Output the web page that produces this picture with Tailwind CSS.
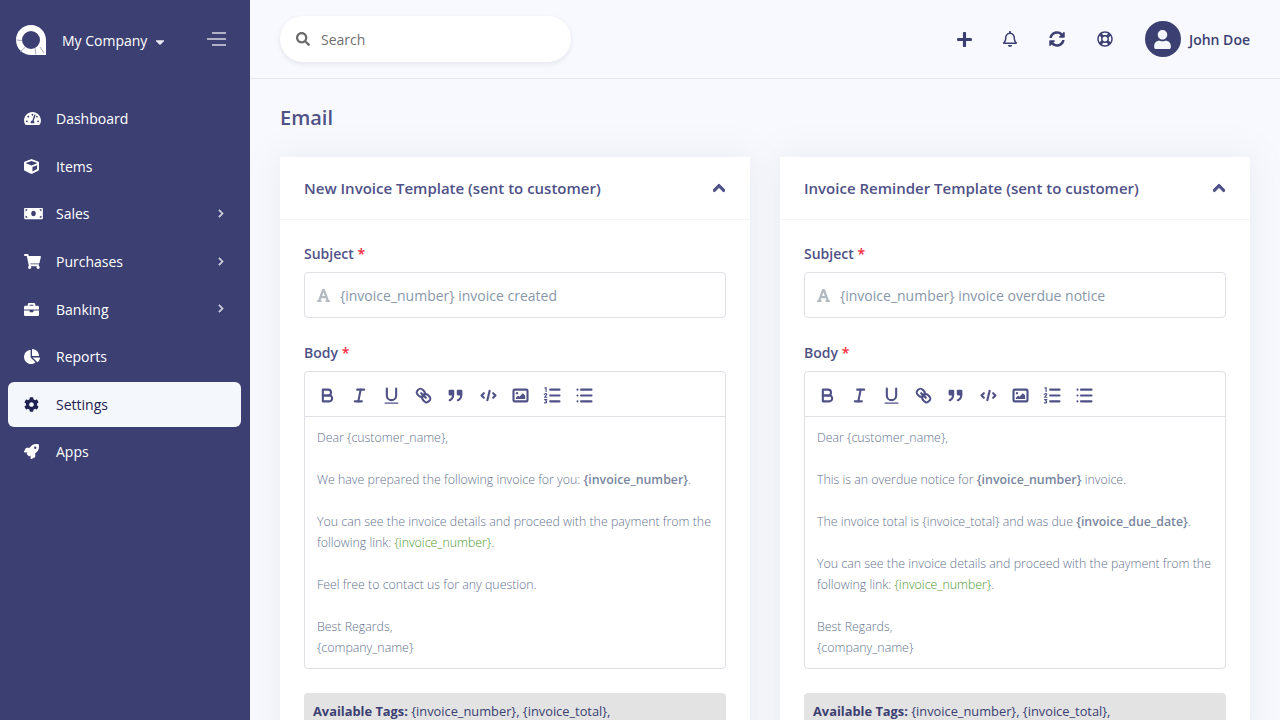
<!DOCTYPE html>
<html lang="en">
<head>
    <meta charset="UTF-8">
    <meta name="viewport" content="width=device-width, initial-scale=1.0">
    <title>Email</title>
    <script src="https://cdn.jsdelivr.net/npm/@tailwindcss/browser@4"></script>
</head>
<body class="h-screen overflow-hidden bg-[#f8f9fe] font-['Open_Sans',sans-serif] text-[#3c3f72]">
    <!-- toolbar icons, shared by both editors -->
    <svg class="hidden">
        <symbol id="ql-bold" viewBox="0 0 18 18"><path d="M5,4H9.5A2.5,2.5,0,0,1,12,6.5v0A2.5,2.5,0,0,1,9.5,9H5V4Z"/><path d="M5,9h5.5A2.5,2.5,0,0,1,13,11.5v0A2.5,2.5,0,0,1,10.5,14H5V9Z"/></symbol>
        <symbol id="ql-italic" viewBox="0 0 18 18"><line x1="7" x2="13" y1="4" y2="4"/><line x1="5" x2="11" y1="14" y2="14"/><line x1="8" x2="10" y1="14" y2="4"/></symbol>
        <symbol id="ql-underline" viewBox="0 0 18 18"><path d="M5,3V9a4,4,0,0,0,4,4H9a4,4,0,0,0,4-4V3"/><rect x="3" y="15" width="12" height="1" rx=".5" fill="currentColor" stroke="none"/></symbol>
        <symbol id="ql-link" viewBox="0 0 18 18"><line x1="7" x2="11" y1="7" y2="11"/><path d="M8.9,4.577a3.476,3.476,0,0,1,.36,4.679A3.476,3.476,0,0,1,4.577,8.9C3.185,7.5,2.035,6.4,4.217,4.217S7.5,3.185,8.9,4.577Z"/><path d="M13.423,9.1a3.476,3.476,0,0,0-4.679-.36,3.476,3.476,0,0,0,.36,4.679c1.392,1.392,2.5,2.542,4.679.36S14.815,10.5,13.423,9.1Z"/></symbol>
        <symbol id="ql-quote" viewBox="0 0 18 18"><rect x="4" y="5" width="3" height="3" fill="currentColor"/><rect x="11" y="5" width="3" height="3" fill="currentColor"/><path d="M7,8c0,4.031-3,5-3,5"/><path d="M14,8c0,4.031-3,5-3,5"/></symbol>
        <symbol id="ql-code" viewBox="0 0 18 18"><polyline points="5 7 3 9 5 11"/><polyline points="13 7 15 9 13 11"/><line x1="10" x2="8" y1="5" y2="13"/></symbol>
        <symbol id="ql-image" viewBox="0 0 18 18"><rect x="3" y="4" width="12" height="10" rx="1"/><circle cx="6" cy="7" r="1" fill="currentColor" stroke="none"/><polyline points="5 12 5 11 7 9 8 10 11 7 13 9 13 12 5 12" fill="currentColor" stroke="none"/></symbol>
        <symbol id="ql-ol" viewBox="0 0 18 18"><line x1="7" x2="15" y1="4" y2="4"/><line x1="7" x2="15" y1="9" y2="9"/><line x1="7" x2="15" y1="14" y2="14"/><path stroke-width="1" d="M2.5 2.6l1-.4v3.3M2 8l1-.6c1-.3 1.4.7.7 1.3L2.2 10.5h2M2.2 12.5h2l-1 1.2c1 0 1.2 1.6-.2 1.6h-.9"/></symbol>
        <symbol id="ql-ul" viewBox="0 0 18 18"><line x1="6" x2="15" y1="4" y2="4"/><line x1="6" x2="15" y1="9" y2="9"/><line x1="6" x2="15" y1="14" y2="14"/><line x1="3" x2="3" y1="4" y2="4"/><line x1="3" x2="3" y1="9" y2="9"/><line x1="3" x2="3" y1="14" y2="14"/></symbol>
        <symbol id="fa-up" viewBox="0 0 448 512"><path fill="currentColor" stroke="currentColor" stroke-width="40" d="M240.971 130.524l194.343 194.343c9.373 9.373 9.373 24.569 0 33.941l-22.667 22.667c-9.357 9.357-24.522 9.375-33.901.04L224 227.495 69.255 381.516c-9.379 9.335-24.544 9.317-33.901-.04l-22.667-22.667c-9.373-9.373-9.373-24.569 0-33.941L207.03 130.525c9.372-9.373 24.568-9.373 33.941-.001z"/></symbol>
        <symbol id="fa-right" viewBox="0 0 320 512"><path fill="currentColor" stroke="currentColor" stroke-width="30" d="M285.476 272.971L91.132 467.314c-9.373 9.373-24.569 9.373-33.941 0l-22.667-22.667c-9.357-9.357-9.375-24.522-.04-33.901L188.505 256 34.484 101.255c-9.335-9.379-9.317-24.544.04-33.901l22.667-22.667c9.373-9.373 24.569-9.373 33.941 0L285.475 239.03c9.373 9.372 9.373 24.568.001 33.941z"/></symbol>
        <symbol id="fa-font" viewBox="0 0 448 512"><path fill="currentColor" stroke="none" d="M432 416h-23.41L277.88 53.69A32 32 0 0 0 247.58 32h-47.16a32 32 0 0 0-30.3 21.69L39.41 416H16a16 16 0 0 0-16 16v32a16 16 0 0 0 16 16h128a16 16 0 0 0 16-16v-32a16 16 0 0 0-16-16h-19.6l23.3-64h152.6l23.3 64H304a16 16 0 0 0-16 16v32a16 16 0 0 0 16 16h128a16 16 0 0 0 16-16v-32a16 16 0 0 0-16-16zM176.85 272L224 142.51 271.15 272z"/></symbol>
    </svg>

    <div class="flex h-screen">
        <!-- Sidebar -->
        <aside class="w-[250px] shrink-0 bg-[#3c3f72] text-white">
            <div class="flex items-center h-[79px] pl-[16px] pr-[24px]">
                <svg class="w-[30px] h-[30px] shrink-0" viewBox="0 0 30 30">
                    <path fill="#fff" fill-rule="evenodd" d="M15 0C6.7 0 0 6.7 0 15s6.7 15 15 15h15V15C30 6.7 23.3 0 15 0zm0 6a9 9 0 1 1 0 18 9 9 0 0 1 0-18z"/>
                    <path stroke="#8f91b3" stroke-width="0.8" d="M0.5 15L6 15.5M4 27l5.5-5M19 23l1 6.5M24 22l4 6"/>
                </svg>
                <span class="ml-[16px] mt-[2px] text-[14px] font-medium">My Company</span>
                <svg class="w-[10px] h-[14px] ml-[8px] mt-[5px] opacity-90" viewBox="0 0 320 512"><path fill="currentColor" d="M31.3 192h257.3c17.8 0 26.7 21.5 14.1 34.1L174.1 354.8c-7.8 7.8-20.5 7.8-28.3 0L17.2 226.1C4.6 213.5 13.5 192 31.3 192z"/></svg>
                <svg class="ml-auto w-[19px] h-[14px] -mt-[1px] text-white/75" viewBox="0 0 19 14" stroke="currentColor" stroke-width="1.6"><line x1="5" x2="19" y1="1" y2="1"/><line x1="0" x2="19" y1="7" y2="7"/><line x1="5" x2="19" y1="13" y2="13"/></svg>
            </div>
            <nav class="mt-[16px] pl-[8px] pr-[9px] text-[14px] font-medium">
                <a class="flex items-center h-[47.6px] pl-[16px] pr-[17px]">
                    <span class="w-[32px] shrink-0"><svg class="w-[17px] h-[15px]" viewBox="0 0 576 512"><path fill="currentColor" d="M288 32C128.94 32 0 160.94 0 320c0 52.8 14.25 102.26 39.06 144.8 5.61 9.62 16.3 15.2 27.44 15.2h443c11.14 0 21.83-5.58 27.44-15.2C561.75 422.26 576 372.8 576 320c0-159.06-128.94-288-288-288zm0 64c14.71 0 26.58 10.13 30.32 23.65-1.11 2.26-2.64 4.23-3.45 6.67l-9.22 27.67c-5.13 3.49-10.97 6.01-17.64 6.01-17.67 0-32-14.33-32-32S270.33 96 288 96zM96 384c-17.67 0-32-14.33-32-32s14.33-32 32-32 32 14.33 32 32-14.33 32-32 32zm48-160c-17.67 0-32-14.33-32-32s14.33-32 32-32 32 14.33 32 32-14.33 32-32 32zm246.77-72.41l-61.33 184C343.13 347.33 352 364.54 352 384c0 11.72-3.38 22.55-8.88 32H232.88c-5.5-9.45-8.88-20.28-8.88-32 0-33.94 26.5-61.43 59.9-63.59l61.34-184.01c4.17-12.56 17.73-19.45 30.36-15.17 12.57 4.19 19.35 17.79 15.17 30.36zm14.66 57.2l15.52-46.55c3.47-1.29 7.13-2.23 11.05-2.23 17.67 0 32 14.33 32 32s-14.33 32-32 32c-11.38-.01-20.89-6.28-26.57-15.22zM480 384c-17.67 0-32-14.33-32-32s14.33-32 32-32 32 14.33 32 32-14.33 32-32 32z"/></svg></span>
                    <span>Dashboard</span>
                </a>
                <a class="flex items-center h-[47.6px] pl-[16px] pr-[17px]">
                    <span class="w-[32px] shrink-0"><svg class="w-[15px] h-[15px]" viewBox="0 0 512 512"><path fill="currentColor" d="M239.1 6.3l-208 78c-18.7 7-31.1 25-31.1 45v225.1c0 18.2 10.3 34.8 26.5 42.9l208 104c13.5 6.8 29.4 6.8 42.9 0l208-104c16.3-8.1 26.5-24.8 26.5-42.9V129.3c0-20-12.4-37.9-31.1-44.9l-208-78C262 2.2 250 2.2 239.1 6.3zM256 68.4l192 72v1.1l-192 78-192-78v-1.1l192-72zm32 356V275.5l160-65v133.9l-160 80z"/></svg></span>
                    <span>Items</span>
                </a>
                <a class="flex items-center h-[47.6px] pl-[16px] pr-[17px]">
                    <span class="w-[32px] shrink-0"><svg class="w-[19px] h-[15px]" viewBox="0 0 640 512"><path fill="currentColor" d="M608 64H32C14.33 64 0 78.33 0 96v320c0 17.67 14.33 32 32 32h576c17.67 0 32-14.33 32-32V96c0-17.67-14.33-32-32-32zM48 400v-64c35.35 0 64 28.65 64 64H48zm0-224v-64h64c0 35.35-28.65 64-64 64zm272 176c-44.19 0-80-42.99-80-96 0-53.02 35.82-96 80-96s80 42.98 80 96c0 53.03-35.83 96-80 96zm272 48h-64c0-35.35 28.65-64 64-64v64zm0-224c-35.35 0-64-28.65-64-64h64v64z"/></svg></span>
                    <span>Sales</span>
                    <svg class="ml-auto w-[6px] h-[9px] -mt-[1px] text-white/70"><use href="#fa-right"/></svg>
                </a>
                <a class="flex items-center h-[47.6px] pl-[16px] pr-[17px]">
                    <span class="w-[32px] shrink-0"><svg class="w-[17px] h-[15px]" viewBox="0 0 576 512"><path fill="currentColor" d="M528.12 301.319l47.273-208C578.806 78.301 567.391 64 551.99 64H159.208l-9.166-44.81C147.758 8.021 137.93 0 126.529 0H24C10.745 0 0 10.745 0 24v16c0 13.255 10.745 24 24 24h69.883l70.248 343.435C147.325 417.1 136 435.222 136 456c0 30.928 25.072 56 56 56s56-25.072 56-56c0-15.674-6.447-29.835-16.824-40h209.647C430.447 426.165 424 440.326 424 456c0 30.928 25.072 56 56 56s56-25.072 56-56c0-22.172-12.888-41.332-31.579-50.405l5.517-24.276c3.413-15.018-8.002-29.319-23.403-29.319H218.117l-6.545-32h293.145c11.206 0 20.92-7.754 23.403-18.681z"/></svg></span>
                    <span>Purchases</span>
                    <svg class="ml-auto w-[6px] h-[9px] -mt-[1px] text-white/70"><use href="#fa-right"/></svg>
                </a>
                <a class="flex items-center h-[47.6px] pl-[16px] pr-[17px]">
                    <span class="w-[32px] shrink-0"><svg class="w-[15px] h-[15px]" viewBox="0 0 512 512"><path fill="currentColor" d="M320 336c0 8.84-7.16 16-16 16h-96c-8.84 0-16-7.16-16-16v-48H0v144c0 25.6 22.4 48 48 48h416c25.6 0 48-22.4 48-48V288H320v48zm144-208h-80V80c0-25.6-22.4-48-48-48H176c-25.6 0-48 22.4-48 48v48H48c-25.6 0-48 22.4-48 48v80h512v-80c0-25.6-22.4-48-48-48zm-144 0H192V96h128v32z"/></svg></span>
                    <span>Banking</span>
                    <svg class="ml-auto w-[6px] h-[9px] -mt-[1px] text-white/70"><use href="#fa-right"/></svg>
                </a>
                <a class="flex items-center h-[47.6px] pl-[16px] pr-[17px]">
                    <span class="w-[32px] shrink-0"><svg class="w-[16px] h-[15px]" viewBox="0 0 544 512"><path fill="currentColor" d="M527.79 288H290.5l158.03 158.03c6.04 6.04 15.98 6.53 22.19.68 38.7-36.46 65.32-85.61 73.13-140.86 1.34-9.46-6.51-17.85-16.06-17.85zm-15.83-64.8C503.72 103.74 408.26 8.28 288.8.04 279.68-.59 272 7.1 272 16.24V240h223.77c9.14 0 16.82-7.68 16.19-16.8zM224 288V50.71c0-9.55-8.39-17.4-17.84-16.06C86.99 51.49-4.1 155.6.14 280.37 4.5 408.51 114.83 513.59 243.03 511.98c50.4-.63 96.97-16.87 135.26-44.03 7.9-5.6 8.42-17.23 1.57-24.08L224 288z"/></svg></span>
                    <span>Reports</span>
                </a>
                <a class="flex items-center h-[45px] my-[1.3px] pl-[16px] pr-[17px] rounded-[6px] bg-[#f4f7fb] text-[#1f2150]">
                    <span class="w-[32px] shrink-0"><svg class="w-[15px] h-[15px]" viewBox="0 0 512 512"><path fill="currentColor" d="M487.4 315.7l-42.6-24.6c4.3-23.2 4.3-47 0-70.2l42.6-24.6c4.9-2.8 7.1-8.6 5.5-14-11.1-35.6-30-67.8-54.7-94.6-3.8-4.1-10-5.1-14.8-2.3L380.8 110c-17.9-15.4-38.5-27.3-60.8-35.1V25.8c0-5.6-3.9-10.5-9.4-11.7-36.7-8.2-74.3-7.8-109.2 0-5.5 1.2-9.4 6.1-9.4 11.7V75c-22.2 7.9-42.8 19.8-60.8 35.1L88.7 85.5c-4.9-2.8-11-1.9-14.8 2.3-24.7 26.7-43.6 58.9-54.7 94.6-1.7 5.4.6 11.2 5.5 14L67.3 221c-4.3 23.2-4.3 47 0 70.2l-42.6 24.6c-4.9 2.8-7.1 8.6-5.5 14 11.1 35.6 30 67.8 54.7 94.6 3.8 4.1 10 5.1 14.8 2.3l42.6-24.6c17.9 15.4 38.5 27.3 60.8 35.1v49.2c0 5.6 3.9 10.5 9.4 11.7 36.7 8.2 74.3 7.8 109.2 0 5.5-1.2 9.4-6.1 9.4-11.7v-49.2c22.2-7.9 42.8-19.8 60.8-35.1l42.6 24.6c4.9 2.8 11 1.9 14.8-2.3 24.7-26.7 43.6-58.9 54.7-94.6 1.5-5.5-.7-11.3-5.6-14.1zM256 336c-44.1 0-80-35.9-80-80s35.9-80 80-80 80 35.9 80 80-35.9 80-80 80z"/></svg></span>
                    <span>Settings</span>
                </a>
                <a class="flex items-center h-[47.6px] pl-[16px] pr-[17px]">
                    <span class="w-[32px] shrink-0"><svg class="w-[15px] h-[15px]" viewBox="0 0 512 512"><path fill="currentColor" d="M505.12019,19.09375c-1.18945-5.53125-6.65819-11-12.207-12.1875C460.716,0,435.507,0,410.40747,0,307.17523,0,245.26909,55.20312,199.05238,128H94.83772c-16.34763.01562-35.55658,11.875-42.88664,26.48438L2.51562,253.29688A28.4,28.4,0,0,0,0,264a24.00867,24.00867,0,0,0,24.00582,24H127.81618l-22.47457,22.46875c-11.36521,11.36133-12.99607,32.25781,0,45.25L156.24582,406.625c11.15623,11.1875,32.15619,13.15625,45.27726,0l22.47457-22.46875V488a24.00867,24.00867,0,0,0,24.00581,24,28.55934,28.55934,0,0,0,10.707-2.51562l98.72834-49.39063c14.62888-7.29687,26.50776-26.5,26.50776-42.85937V312.79688c72.59753-46.3125,128.03493-108.40626,128.03493-211.09376C512.07526,76.5,512.07526,51.29688,505.12019,19.09375ZM384.04033,168A40,40,0,1,1,424.05,128,40.02322,40.02322,0,0,1,384.04033,168Z"/></svg></span>
                    <span>Apps</span>
                </a>
            </nav>
        </aside>

        <!-- Main -->
        <div class="flex-1 min-w-0">
            <header class="flex items-center h-[79px] pl-[30px] pr-[30px] border-b border-[#e6e8ef]">
                <div class="flex items-center w-[291px] h-[46px] -mt-[1px] pl-[16px] rounded-full bg-white shadow-[0_2px_5px_rgba(50,50,93,0.1)]">
                    <svg class="w-[14px] h-[14px] text-[#6b6b6b]" viewBox="0 0 512 512"><path fill="currentColor" d="M505 442.7L405.3 343c-4.5-4.5-10.6-7-17-7H372c27.6-35.3 44-79.7 44-128C416 93.1 322.9 0 208 0S0 93.1 0 208s93.1 208 208 208c48.3 0 92.7-16.4 128-44v16.3c0 6.4 2.5 12.5 7 17l99.7 99.7c9.4 9.4 24.6 9.4 33.9 0l28.3-28.3c9.4-9.4 9.4-24.6.1-34zM208 336c-70.7 0-128-57.2-128-128 0-70.7 57.2-128 128-128 70.7 0 128 57.2 128 128 0 70.7-57.2 128-128 128z"/></svg>
                    <span class="ml-[11px] mt-[2px] text-[14px] text-[#6f6f6f]">Search</span>
                </div>
                <div class="flex items-center ml-auto">
                    <svg class="w-[15px] h-[17px]" viewBox="0 0 448 512"><path fill="currentColor" d="M416 208H272V64c0-17.67-14.33-32-32-32h-32c-17.67 0-32 14.33-32 32v144H32c-17.67 0-32 14.33-32 32v32c0 17.67 14.33 32 32 32h144v144c0 17.67 14.33 32 32 32h32c17.67 0 32-14.33 32-32V304h144c17.67 0 32-14.33 32-32v-32c0-17.67-14.33-32-32-32z"/></svg>
                    <svg class="ml-[31px] w-[14px] h-[16px]" viewBox="0 0 448 512"><path fill="currentColor" d="M439.39 362.29c-19.32-20.76-55.47-51.99-55.47-154.29 0-77.7-54.48-139.9-127.94-155.16V32c0-17.67-14.32-32-31.98-32s-31.98 14.33-31.98 32v20.84C118.56 68.1 64.08 130.3 64.08 208c0 102.3-36.15 133.53-55.47 154.29-6 6.45-8.66 14.16-8.61 21.71.11 16.4 12.98 32 32.1 32h383.8c19.12 0 32-15.6 32.1-32 .05-7.55-2.61-15.27-8.61-21.71zM67.53 368c21.22-27.97 44.42-74.33 44.53-159.42 0-.2-.06-.38-.06-.58 0-61.86 50.14-112 112-112s112 50.14 112 112c0 .2-.06.38-.06.58.11 85.1 23.31 131.46 44.53 159.42H67.53zM224 512c35.32 0 63.97-28.65 63.97-64H160.03c0 35.35 28.65 64 63.97 64z"/></svg>
                    <svg class="ml-[32px] w-[16px] h-[16px]" viewBox="0 0 512 512"><path fill="currentColor" d="M370.72 133.28C339.458 104.008 298.888 87.962 255.848 88c-77.458.068-144.328 53.178-162.791 126.85-1.344 5.363-6.122 9.15-11.651 9.15H24.103c-7.498 0-13.194-6.807-11.807-14.176C33.933 94.924 134.813 8 256 8c66.448 0 126.791 26.136 171.315 68.685L463.03 40.97C478.149 25.851 504 36.559 504 57.941V192c0 13.255-10.745 24-24 24H345.941c-21.382 0-32.09-25.851-16.971-40.971l41.75-41.749zM32 296h134.059c21.382 0 32.09 25.851 16.971 40.971l-41.75 41.75c31.262 29.273 71.835 45.319 114.876 45.28 77.418-.07 144.315-53.144 162.787-126.849 1.344-5.363 6.122-9.15 11.651-9.15h57.304c7.498 0 13.194 6.807 11.807 14.176C478.067 417.076 377.187 504 256 504c-66.448 0-126.791-26.136-171.315-68.685L48.97 471.03C33.851 486.149 8 475.441 8 454.059V320c0-13.255 10.745-24 24-24z"/></svg>
                    <svg class="ml-[32px] w-[16px] h-[16px]" viewBox="0 0 512 512"><path fill="currentColor" d="M256 504c136.967 0 248-111.033 248-248S392.967 8 256 8 8 119.033 8 256s111.033 248 248 248zm-103.398-76.72l53.411-53.411c31.806 13.506 68.128 13.522 99.974 0l53.411 53.411c-63.217 38.319-143.579 38.319-206.796 0zM336 256c0 44.112-35.888 80-80 80s-80-35.888-80-80 35.888-80 80-80 80 35.888 80 80zm91.28 103.398l-53.411-53.411c13.505-31.806 13.522-68.128 0-99.974l53.411-53.411c38.319 63.217 38.319 143.579 0 206.796zM359.397 84.72l-53.411 53.411c-31.806-13.505-68.128-13.522-99.973 0L152.602 84.72c63.217-38.319 143.579-38.319 206.795 0zM84.72 152.602l53.411 53.411c-13.506 31.806-13.522 68.128 0 99.974L84.72 359.398c-38.319-63.217-38.319-143.579 0-206.796z"/></svg>
                    <span class="ml-[32px] flex items-center justify-center w-[36px] h-[36px] rounded-full bg-[#3c3f72]">
                        <svg class="w-[17px] h-[19px] text-[#f4f7fb]" viewBox="0 0 448 512"><path fill="currentColor" d="M224 256c70.7 0 128-57.3 128-128S294.7 0 224 0 96 57.3 96 128s57.3 128 128 128zm89.6 32h-16.7c-22.2 10.2-46.9 16-72.9 16s-50.6-5.8-72.9-16h-16.7C60.2 288 0 348.2 0 422.4V464c0 26.5 21.5 48 48 48h352c26.5 0 48-21.5 48-48v-41.6c0-74.2-60.2-134.4-134.4-134.4z"/></svg>
                    </span>
                    <span class="ml-[8px] text-[14px] font-semibold">John Doe</span>
                </div>
            </header>

            <main class="px-[30px]">
                <h1 class="h-[78px] pt-[22px] text-[20px] leading-[34px] font-semibold text-[#4f5187]">Email</h1>
                <div class="grid grid-cols-2 gap-[30px]">
                    <!-- New invoice -->
                    <section class="bg-white shadow-[0_0_32px_rgba(136,152,170,0.15)]">
                        <div class="flex items-center justify-between h-[63px] px-[24px] border-b border-[#f4f5f8]">
                            <h2 class="text-[15px] font-semibold text-[#4f5187]">New Invoice Template (sent to customer)</h2>
                            <svg class="w-[12px] h-[14px] -mt-[1px] mr-[1px] text-[#4f5187]"><use href="#fa-up"/></svg>
                        </div>
                        <div class="px-[24px] pt-[23px]">
                            <label class="block h-[29px] text-[14px] leading-[21px] font-semibold text-[#4f5187]">Subject <span class="text-[#ef2b3c]">*</span></label>
                            <div class="flex items-center h-[46px] border border-[#dee0e6] rounded-[4px] pl-[12px] bg-white">
                                <svg class="w-[13px] h-[15px] text-[#b4bac2]"><use href="#fa-font"/></svg>
                                <span class="ml-[10px] text-[14px] text-[#8898aa]">{invoice_number} invoice created</span>
                            </div>
                            <label class="block h-[29px] mt-[24px] text-[14px] leading-[21px] font-semibold text-[#4f5187]">Body <span class="text-[#ef2b3c]">*</span></label>
                            <div class="h-[298px] border border-[#dee0e6] rounded-[4px]">
                                <div class="flex items-center h-[45px] pt-[3px] pl-[6px] border-b border-[#dee0e6] text-[#4f5187]">
                                    <span class="flex justify-center w-[32.2px]"><svg class="w-[21px] h-[21px] fill-none stroke-current stroke-[1.8] [stroke-linecap:round] [stroke-linejoin:round]"><use href="#ql-bold"/></svg></span>
                                    <span class="flex justify-center w-[32.2px]"><svg class="w-[21px] h-[21px] fill-none stroke-current stroke-[1.8] [stroke-linecap:round] [stroke-linejoin:round]"><use href="#ql-italic"/></svg></span>
                                    <span class="flex justify-center w-[32.2px]"><svg class="w-[21px] h-[21px] fill-none stroke-current stroke-[1.8] [stroke-linecap:round] [stroke-linejoin:round]"><use href="#ql-underline"/></svg></span>
                                    <span class="flex justify-center w-[32.2px]"><svg class="w-[21px] h-[21px] fill-none stroke-current stroke-[1.8] [stroke-linecap:round] [stroke-linejoin:round]"><use href="#ql-link"/></svg></span>
                                    <span class="flex justify-center w-[32.2px]"><svg class="w-[21px] h-[21px] fill-none stroke-current stroke-[1.8] [stroke-linecap:round] [stroke-linejoin:round]"><use href="#ql-quote"/></svg></span>
                                    <span class="flex justify-center w-[32.2px]"><svg class="w-[21px] h-[21px] fill-none stroke-current stroke-[1.8] [stroke-linecap:round] [stroke-linejoin:round]"><use href="#ql-code"/></svg></span>
                                    <span class="flex justify-center w-[32.2px]"><svg class="w-[21px] h-[21px] fill-none stroke-current stroke-[1.8] [stroke-linecap:round] [stroke-linejoin:round]"><use href="#ql-image"/></svg></span>
                                    <span class="flex justify-center w-[32.2px]"><svg class="w-[21px] h-[21px] fill-none stroke-current stroke-[1.8] [stroke-linecap:round] [stroke-linejoin:round]"><use href="#ql-ol"/></svg></span>
                                    <span class="flex justify-center w-[32.2px]"><svg class="w-[21px] h-[21px] fill-none stroke-current stroke-[1.8] [stroke-linecap:round] [stroke-linejoin:round]"><use href="#ql-ul"/></svg></span>
                                </div>
                                <div class="px-[12px] pt-[10px] text-[12.375px] leading-[21px] font-light text-[#66738f]">
                                    <p>Dear {customer_name},</p>
                                    <p class="mt-[21px]">We have prepared the following invoice for you: <strong class="font-semibold text-[#7a86a0]">{invoice_number}</strong>.</p>
                                    <p class="mt-[21px]">You can see the invoice details and proceed with the payment from the following link: <span class="text-[#4f9a2f]">{invoice_number}</span>.</p>
                                    <p class="mt-[21px]">Feel free to contact us for any question.</p>
                                    <p class="mt-[21px]">Best Regards,<br>{company_name}</p>
                                </div>
                            </div>
                            <div class="h-[60px] mt-[24px] px-[9px] pt-[8px] rounded-[4px] bg-[#e3e3e3] text-[12.83px] leading-[20px]"><b class="font-bold">Available Tags:</b> {invoice_number}, {invoice_total},</div>
                        </div>
                    </section>

                    <!-- Invoice reminder -->
                    <section class="bg-white shadow-[0_0_32px_rgba(136,152,170,0.15)]">
                        <div class="flex items-center justify-between h-[63px] px-[24px] border-b border-[#f4f5f8]">
                            <h2 class="text-[15px] font-semibold text-[#4f5187]">Invoice Reminder Template (sent to customer)</h2>
                            <svg class="w-[12px] h-[14px] -mt-[1px] mr-[1px] text-[#4f5187]"><use href="#fa-up"/></svg>
                        </div>
                        <div class="px-[24px] pt-[23px]">
                            <label class="block h-[29px] text-[14px] leading-[21px] font-semibold text-[#4f5187]">Subject <span class="text-[#ef2b3c]">*</span></label>
                            <div class="flex items-center h-[46px] border border-[#dee0e6] rounded-[4px] pl-[12px] bg-white">
                                <svg class="w-[13px] h-[15px] text-[#b4bac2]"><use href="#fa-font"/></svg>
                                <span class="ml-[10px] text-[14px] text-[#8898aa]">{invoice_number} invoice overdue notice</span>
                            </div>
                            <label class="block h-[29px] mt-[24px] text-[14px] leading-[21px] font-semibold text-[#4f5187]">Body <span class="text-[#ef2b3c]">*</span></label>
                            <div class="h-[298px] border border-[#dee0e6] rounded-[4px]">
                                <div class="flex items-center h-[45px] pt-[3px] pl-[6px] border-b border-[#dee0e6] text-[#4f5187]">
                                    <span class="flex justify-center w-[32.2px]"><svg class="w-[21px] h-[21px] fill-none stroke-current stroke-[1.8] [stroke-linecap:round] [stroke-linejoin:round]"><use href="#ql-bold"/></svg></span>
                                    <span class="flex justify-center w-[32.2px]"><svg class="w-[21px] h-[21px] fill-none stroke-current stroke-[1.8] [stroke-linecap:round] [stroke-linejoin:round]"><use href="#ql-italic"/></svg></span>
                                    <span class="flex justify-center w-[32.2px]"><svg class="w-[21px] h-[21px] fill-none stroke-current stroke-[1.8] [stroke-linecap:round] [stroke-linejoin:round]"><use href="#ql-underline"/></svg></span>
                                    <span class="flex justify-center w-[32.2px]"><svg class="w-[21px] h-[21px] fill-none stroke-current stroke-[1.8] [stroke-linecap:round] [stroke-linejoin:round]"><use href="#ql-link"/></svg></span>
                                    <span class="flex justify-center w-[32.2px]"><svg class="w-[21px] h-[21px] fill-none stroke-current stroke-[1.8] [stroke-linecap:round] [stroke-linejoin:round]"><use href="#ql-quote"/></svg></span>
                                    <span class="flex justify-center w-[32.2px]"><svg class="w-[21px] h-[21px] fill-none stroke-current stroke-[1.8] [stroke-linecap:round] [stroke-linejoin:round]"><use href="#ql-code"/></svg></span>
                                    <span class="flex justify-center w-[32.2px]"><svg class="w-[21px] h-[21px] fill-none stroke-current stroke-[1.8] [stroke-linecap:round] [stroke-linejoin:round]"><use href="#ql-image"/></svg></span>
                                    <span class="flex justify-center w-[32.2px]"><svg class="w-[21px] h-[21px] fill-none stroke-current stroke-[1.8] [stroke-linecap:round] [stroke-linejoin:round]"><use href="#ql-ol"/></svg></span>
                                    <span class="flex justify-center w-[32.2px]"><svg class="w-[21px] h-[21px] fill-none stroke-current stroke-[1.8] [stroke-linecap:round] [stroke-linejoin:round]"><use href="#ql-ul"/></svg></span>
                                </div>
                                <div class="px-[12px] pt-[10px] text-[12.375px] leading-[21px] font-light text-[#66738f]">
                                    <p>Dear {customer_name},</p>
                                    <p class="mt-[21px]">This is an overdue notice for <strong class="font-semibold text-[#7a86a0]">{invoice_number}</strong> invoice.</p>
                                    <p class="mt-[21px]">The invoice total is {invoice_total} and was due <strong class="font-semibold text-[#7a86a0]">{invoice_due_date}</strong>.</p>
                                    <p class="mt-[21px]">You can see the invoice details and proceed with the payment from the following link: <span class="text-[#4f9a2f]">{invoice_number}</span>.</p>
                                    <p class="mt-[21px]">Best Regards,<br>{company_name}</p>
                                </div>
                            </div>
                            <div class="h-[60px] mt-[24px] px-[9px] pt-[8px] rounded-[4px] bg-[#e3e3e3] text-[12.83px] leading-[20px]"><b class="font-bold">Available Tags:</b> {invoice_number}, {invoice_total},</div>
                        </div>
                    </section>
                </div>
            </main>
        </div>
    </div>
</body>
</html>
